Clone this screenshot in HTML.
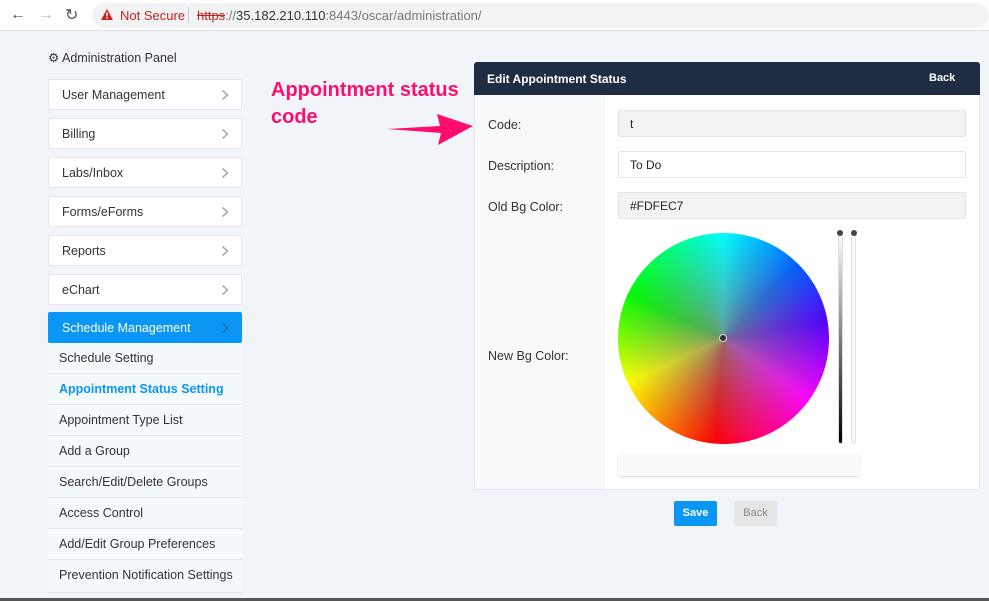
<!DOCTYPE html>
<html><head><style>
*{box-sizing:border-box;margin:0;padding:0}
body{width:989px;height:601px;background:#f1f4f8;font-family:"Liberation Sans",sans-serif;position:relative;overflow:hidden;font-size:12px;color:#333}
.a{position:absolute}
.top{left:0;top:0;width:989px;height:31px;background:#fff;border-bottom:1px solid #e2e2e2}
.url{left:92px;top:3px;width:897px;height:25px;background:#f1f3f4;border-radius:13px}
.item{position:absolute;left:48px;width:194px;height:31px;background:#fff;border:1px solid #e4e7eb;border-radius:2px;padding-left:13px;line-height:30px;font-size:12.5px;color:#333}
.item svg{position:absolute;right:12px;top:9px}
.sub{position:absolute;left:48px;width:194px;height:31px;background:#f4f9fc;border-bottom:1px solid #e2e6ea;padding-left:11px;line-height:31px;font-size:12.5px;color:#333}
.lbl{position:absolute;left:488px;font-size:12.5px;color:#333}
.inp{position:absolute;left:618px;width:348px;height:27px;border:1px solid #e6e6e6;border-radius:2px;padding-left:11px;line-height:26px;font-size:12px;color:#222}
</style></head><body>
<div class="a top"></div>
<div class="a url"></div>
<div class="a" style="left:10px;top:6px;font-size:16px;color:#555">&#8592;</div>
<div class="a" style="left:38px;top:6px;font-size:16px;color:#bbb">&#8594;</div>
<div class="a" style="left:65px;top:5px;font-size:16px;color:#555">&#8635;</div>
<svg class="a" style="left:100px;top:8px" width="14" height="13"><path d="M7 1L13 12H1Z" fill="#c5221f"/><rect x="6.3" y="4.5" width="1.4" height="4" fill="#fff"/><rect x="6.3" y="9.3" width="1.4" height="1.4" fill="#fff"/></svg>
<div class="a" style="left:120px;top:8px;font-size:13px;color:#c5221f">Not Secure</div>
<div class="a" style="left:188px;top:7px;width:1px;height:16px;background:#ccc"></div>
<div class="a" style="left:197px;top:8px;font-size:13px;color:#333"><span style="color:#c5221f;text-decoration:line-through">https</span><span style="color:#777">://</span>35.182.210.110<span style="color:#777">:8443/oscar/administration/</span></div>

<div class="a" style="left:48px;top:50px;font-size:12.5px;color:#333">&#9881; Administration Panel</div>
<div class="item" style="top:79px">User Management<svg width="8" height="12"><path d="M1.5 1.5L6.5 6L1.5 10.5" stroke="#aaa" stroke-width="1.6" fill="none"/></svg></div>
<div class="item" style="top:118px">Billing<svg width="8" height="12"><path d="M1.5 1.5L6.5 6L1.5 10.5" stroke="#aaa" stroke-width="1.6" fill="none"/></svg></div>
<div class="item" style="top:157px">Labs/Inbox<svg width="8" height="12"><path d="M1.5 1.5L6.5 6L1.5 10.5" stroke="#aaa" stroke-width="1.6" fill="none"/></svg></div>
<div class="item" style="top:196px">Forms/eForms<svg width="8" height="12"><path d="M1.5 1.5L6.5 6L1.5 10.5" stroke="#aaa" stroke-width="1.6" fill="none"/></svg></div>
<div class="item" style="top:235px">Reports<svg width="8" height="12"><path d="M1.5 1.5L6.5 6L1.5 10.5" stroke="#aaa" stroke-width="1.6" fill="none"/></svg></div>
<div class="item" style="top:274px">eChart<svg width="8" height="12"><path d="M1.5 1.5L6.5 6L1.5 10.5" stroke="#aaa" stroke-width="1.6" fill="none"/></svg></div>
<div class="item" style="top:312px;background:#0a96f5;border-color:#0a96f5;color:#fff">Schedule Management<svg width="8" height="12"><path d="M1.5 1.5L6.5 6L1.5 10.5" stroke="#2a70b0" stroke-width="1.6" fill="none"/></svg></div>
<div class="sub" style="top:343px">Schedule Setting</div>
<div class="sub" style="top:374px;color:#0a96f5;font-weight:bold">Appointment Status Setting</div>
<div class="sub" style="top:405px">Appointment Type List</div>
<div class="sub" style="top:436px">Add a Group</div>
<div class="sub" style="top:467px">Search/Edit/Delete Groups</div>
<div class="sub" style="top:498px">Access Control</div>
<div class="sub" style="top:529px">Add/Edit Group Preferences</div>
<div class="sub" style="top:560px;height:33px">Prevention Notification Settings</div>
<div class="a" style="left:0;top:598px;width:989px;height:3px;background:#555"></div>

<div class="a" style="left:271px;top:77px;font-size:20px;font-weight:bold;color:#ff0d6e;line-height:27px;text-shadow:1px 1px 1px #fff">Appointment status<br>code</div>
<svg class="a" style="left:385px;top:108px" width="90" height="40"><path d="M2 21L55 18L52 6L88 18L53 37L56 25Z" fill="#ff0d6e"/></svg>

<div class="a" style="left:474px;top:62px;width:506px;height:428px;background:#fff;border:1px solid #e4e7eb;border-radius:3px"></div>
<div class="a" style="left:474px;top:62px;width:506px;height:33px;background:#1f2d44;border-radius:3px 3px 0 0"></div>
<div class="a" style="left:487px;top:72px;color:#fff;font-weight:bold;font-size:12px">Edit Appointment Status</div>
<div class="a" style="left:929px;top:72px;color:#fff;font-weight:bold;font-size:11px">Back</div>
<div class="a" style="left:475px;top:95px;width:130px;height:394px;background:#f8f9fa"></div>
<div class="lbl" style="top:118px">Code:</div>
<div class="lbl" style="top:159px">Description:</div>
<div class="lbl" style="top:200px">Old Bg Color:</div>
<div class="lbl" style="top:349px">New Bg Color:</div>
<div class="inp" style="top:110px;background:#f3f3f3">t</div>
<div class="inp" style="top:151px;background:#fff">To Do</div>
<div class="inp" style="top:192px;background:#f3f3f3">#FDFEC7</div>

<div class="a" style="left:618px;top:233px;width:211px;height:211px;border-radius:50%;background:radial-gradient(circle,rgba(128,128,128,.8) 0%,rgba(128,128,128,.4) 35%,rgba(128,128,128,0) 72%),conic-gradient(#00ffff 0deg,#0060ff 45deg,#5000ff 80deg,#c000ff 110deg,#ff00ff 125deg,#ff0070 160deg,#ff0000 185deg,#ff8000 215deg,#ffff00 245deg,#80ff00 270deg,#00ff00 295deg,#00ff80 330deg,#00ffff 360deg)"></div>
<div class="a" style="left:719px;top:334px;width:8px;height:8px;border-radius:50%;background:#333;border:1.5px solid #ddd"></div>
<div class="a" style="left:838px;top:232px;width:5px;height:212px;border-radius:3px;background:linear-gradient(#fff,#000);border:1px solid #ddd"></div>
<div class="a" style="left:851px;top:232px;width:5px;height:212px;border-radius:3px;background:#f7f7f7;border:1px solid #e5e5e5"></div>
<div class="a" style="left:837px;top:230px;width:6px;height:6px;border-radius:50%;background:#444"></div>
<div class="a" style="left:851px;top:230px;width:6px;height:6px;border-radius:50%;background:#444"></div>
<div class="a" style="left:618px;top:454px;width:242px;height:22px;background:#fafafa;border-radius:2px;box-shadow:0 1px 2px rgba(0,0,0,.15)"></div>

<div class="a" style="left:674px;top:501px;width:43px;height:25px;background:#0a96f5;color:#fff;font-weight:bold;font-size:11px;text-align:center;line-height:25px;border-radius:2px">Save</div>
<div class="a" style="left:734px;top:501px;width:43px;height:25px;background:#e6e6e6;color:#888;font-size:11px;text-align:center;line-height:25px;border-radius:2px">Back</div>
</body></html>
